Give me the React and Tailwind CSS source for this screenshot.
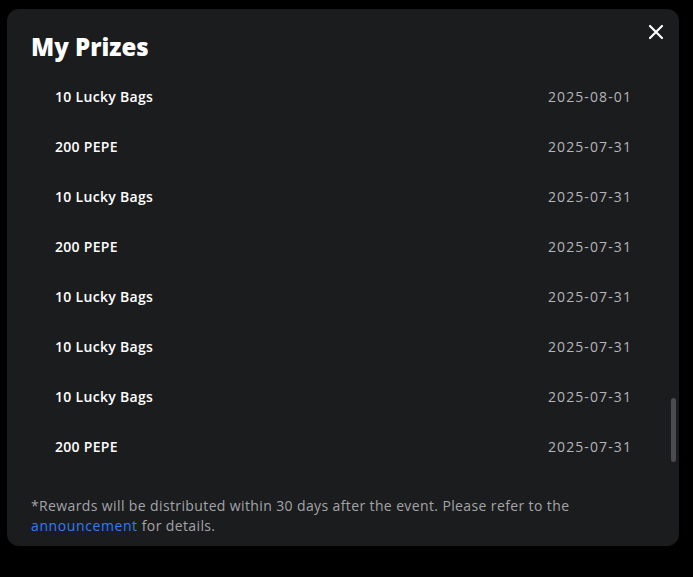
import React from "react";

const prizes = [
  { name: "10 Lucky Bags", date: "2025-08-01" },
  { name: "200 PEPE", date: "2025-07-31" },
  { name: "10 Lucky Bags", date: "2025-07-31" },
  { name: "200 PEPE", date: "2025-07-31" },
  { name: "10 Lucky Bags", date: "2025-07-31" },
  { name: "10 Lucky Bags", date: "2025-07-31" },
  { name: "10 Lucky Bags", date: "2025-07-31" },
  { name: "200 PEPE", date: "2025-07-31" },
];

const App = () => {
  return (
    <div
      className="w-[693px] h-[577px] bg-black pt-[9px] pl-[7px] overflow-hidden"
      style={{ fontFamily: "'Open Sans', 'Liberation Sans', sans-serif" }}
    >
      <div className="relative w-[672px] h-[537px] rounded-xl bg-[#1b1c1e] flex flex-col">
        {/* Header */}
        <div className="flex items-start justify-between pl-6 pr-4 pt-[22px] h-[62px]">
          <h2 className="text-[24px] leading-8 font-extrabold text-white tracking-[0px]">My Prizes</h2>
          <button className="text-white -mt-[7px] -mr-[1px]">
            <svg width="16" height="16" viewBox="0 0 16 16" fill="none">
              <path d="M2 2L14 14M14 2L2 14" stroke="currentColor" strokeWidth="2.2" strokeLinecap="round" />
            </svg>
          </button>
        </div>

        {/* List */}
        <div className="relative h-[400px] overflow-hidden">
          {prizes.map((p, i) => (
            <div key={i} className="h-[50px] flex items-center justify-between px-12">
              <span className="text-[14px] font-semibold text-white tracking-[0.3px]">{p.name}</span>
              <span className="text-[14px] text-[#b4b5b8] tracking-[1.1px] -mr-[1px]">{p.date}</span>
            </div>
          ))}
          <div className="absolute right-[3px] top-[327px] w-[5px] h-[64px] rounded-full bg-[#4b4c50]" />
        </div>

        {/* Footer */}
        <div className="px-6 pt-[25px] text-[14px] leading-5 text-[#a3a4a7] tracking-[0.38px]">
          *Rewards will be distributed within 30 days after the event. Please refer to the
          <br />
          <span className="text-[#2f7cf6] tracking-[0.6px]">announcement</span> for details.
        </div>
      </div>
    </div>
  );
};

export default App;
